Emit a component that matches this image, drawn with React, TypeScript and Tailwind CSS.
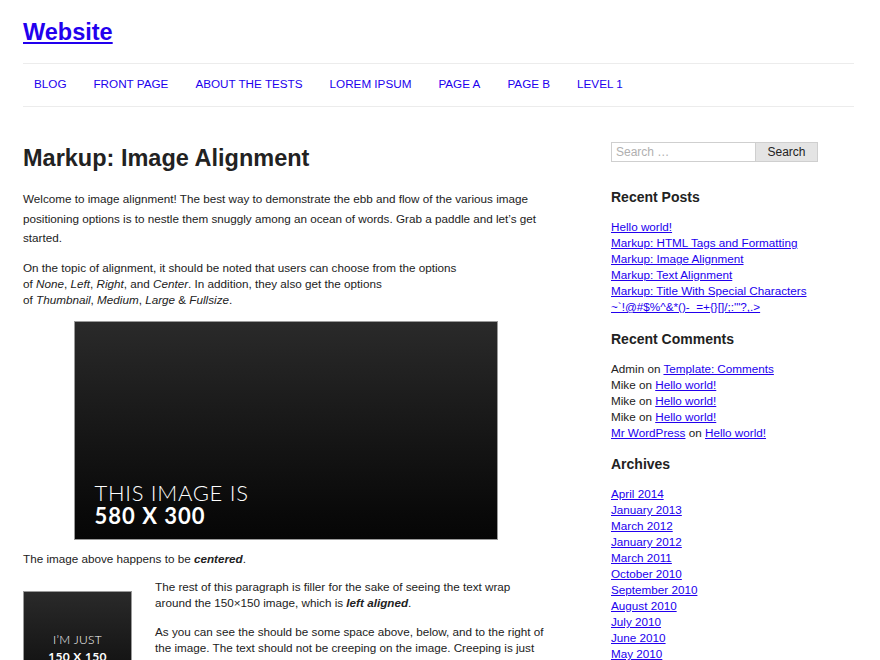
const navItems = [
  "Blog",
  "Front Page",
  "About The Tests",
  "Lorem Ipsum",
  "Page A",
  "Page B",
  "Level 1",
];

const recentPosts = [
  "Hello world!",
  "Markup: HTML Tags and Formatting",
  "Markup: Image Alignment",
  "Markup: Text Alignment",
  "Markup: Title With Special Characters ~`!@#$%^&*()-_=+{}[]/;:'\"?,.>",
];

const comments = [
  { author: "Admin", authorLink: false, post: "Template: Comments" },
  { author: "Mike", authorLink: false, post: "Hello world!" },
  { author: "Mike", authorLink: false, post: "Hello world!" },
  { author: "Mike", authorLink: false, post: "Hello world!" },
  { author: "Mr WordPress", authorLink: true, post: "Hello world!" },
];

const archives = [
  "April 2014",
  "January 2013",
  "March 2012",
  "January 2012",
  "March 2011",
  "October 2010",
  "September 2010",
  "August 2010",
  "July 2010",
  "June 2010",
  "May 2010",
  "April 2010",
  "March 2010",
];

const link = "text-[#2200ee] underline underline-offset-[1px]";

function SidebarHeading({ children }: { children: React.ReactNode }) {
  return (
    <h2 className="text-[14px] font-bold leading-[18px] text-[#222]">
      {children}
    </h2>
  );
}

function Sidebar() {
  return (
    <aside className="-mt-[2px] w-[243px] shrink-0 text-[11.7px] leading-[16px] text-[#222]">
      <form className="flex h-[20px]" onSubmit={(e) => e.preventDefault()}>
        <input
          type="search"
          placeholder="Search …"
          className="h-full w-[145px] border border-[#cfcfcf] bg-white px-[4px] text-[12px] text-[#222] outline-none placeholder:text-[#b0b0b0]"
        />
        <button
          type="submit"
          className="h-full w-[62px] border border-l-0 border-[#cfcfcf] bg-[#e4e4e4] text-[12px] text-[#222]"
        >
          Search
        </button>
      </form>

      <div className="mt-[26px]">
        <SidebarHeading>Recent Posts</SidebarHeading>
        <ul className="mt-[13px]">
          {recentPosts.map((p) => (
            <li key={p}>
              <a href="#" className={link}>
                {p}
              </a>
            </li>
          ))}
        </ul>
      </div>

      <div className="mt-[15px]">
        <SidebarHeading>Recent Comments</SidebarHeading>
        <ul className="mt-[13px]">
          {comments.map((c, i) => (
            <li key={i}>
              {c.authorLink ? (
                <a href="#" className={link}>
                  {c.author}
                </a>
              ) : (
                c.author
              )}{" "}
              on{" "}
              <a href="#" className={link}>
                {c.post}
              </a>
            </li>
          ))}
        </ul>
      </div>

      <div className="mt-[14px]">
        <SidebarHeading>Archives</SidebarHeading>
        <ul className="mt-[13px]">
          {archives.map((a) => (
            <li key={a}>
              <a href="#" className={link}>
                {a}
              </a>
            </li>
          ))}
        </ul>
      </div>
    </aside>
  );
}

function Article() {
  return (
    <article className="w-[525px] shrink-0 text-[11.7px] text-[#222]">
      <h1 className="text-[23.5px] font-bold leading-[28px] text-[#222]">
        Markup: Image Alignment
      </h1>

      <p className="mt-[17px] leading-[19.5px]">
        Welcome to image alignment! The best way to demonstrate the ebb and
        flow of the various image positioning options is to nestle them
        snuggly among an ocean of words. Grab a paddle and let’s get started.
      </p>

      <p className="mt-[12px] leading-[16px]">
        On the topic of alignment, it should be noted that users can choose
        from the options
        <br />
        of <em>None</em>, <em>Left</em>, <em>Right</em>, and <em>Center</em>.
        In addition, they also get the options
        <br />
        of <em>Thumbnail</em>, <em>Medium</em>, <em>Large</em> &amp;{" "}
        <em>Fullsize</em>.
      </p>

      <div className="mt-[13px] flex justify-center">
        <div className="flex h-[219px] w-[424px] flex-col justify-end border border-[#9a9a9a] bg-gradient-to-b from-[#2a2a2a] to-[#060606] px-[20px] pb-[12px] font-['Lato',sans-serif] text-white">
          <span className="text-[22px] font-light leading-[23px] tracking-[0.7px]">
            THIS IMAGE IS
          </span>
          <span className="text-[22px] font-bold leading-[23px] tracking-[1px]">
            580 X 300
          </span>
        </div>
      </div>

      <p className="mt-[11px] leading-[16px]">
        The image above happens to be{" "}
        <strong>
          <em>centered</em>
        </strong>
        .
      </p>

      <div className="mt-[12px] leading-[16px]">
        <div className="float-left mr-[23px] mt-[12px] flex h-[109px] w-[109px] flex-col items-center border border-[#9a9a9a] bg-gradient-to-b from-[#2a2a2a] to-[#0a0a0a] pt-[39px] font-['Lato',sans-serif] text-white">
          <span className="text-[12px] font-light leading-[17px] tracking-[0.3px]">
            I’M JUST
          </span>
          <span className="text-[12px] font-bold leading-[17px] tracking-[0.3px]">
            150 X 150
          </span>
        </div>
        <p>
          The rest of this paragraph is filler for the sake of seeing the text
          wrap around the 150×150 image, which is{" "}
          <strong>
            <em>left aligned</em>
          </strong>
          .
        </p>
        <p className="mt-[13px]">
          As you can see the should be some space above, below, and to the
          right of the image. The text should not be creeping on the image.
          Creeping is just not right. Images need breathing room too. Let them
          speak like you words. Let them do their jobs without any hassle from
          the text. In about one more sentence here, we’ll see that the text
          moves from the right of the image down below the image in seamless
          transition. Again, letting the do it’s thing.
        </p>
      </div>
    </article>
  );
}

export default function App() {
  return (
    <div className="min-h-[660px] bg-white px-[23px] font-['Liberation_Sans',Arial,sans-serif]">
      <header className="pt-[18px]">
        <a
          href="#"
          className="text-[23.5px] font-bold leading-[28px] text-[#2200ee] underline decoration-2 underline-offset-[2px]"
        >
          Website
        </a>
      </header>

      <nav className="mt-[16px] w-[831px] border-y border-[#ececec]">
        <ul className="flex h-[42px] items-center gap-[27px] pb-[4px] pl-[11px]">
          {navItems.map((item) => (
            <li key={item}>
              <a
                href="#"
                className="text-[11.7px] uppercase text-[#2200ee]"
              >
                {item}
              </a>
            </li>
          ))}
        </ul>
      </nav>

      <div className="mt-[37px] flex gap-[63px]">
        <Article />
        <Sidebar />
      </div>
    </div>
  );
}
